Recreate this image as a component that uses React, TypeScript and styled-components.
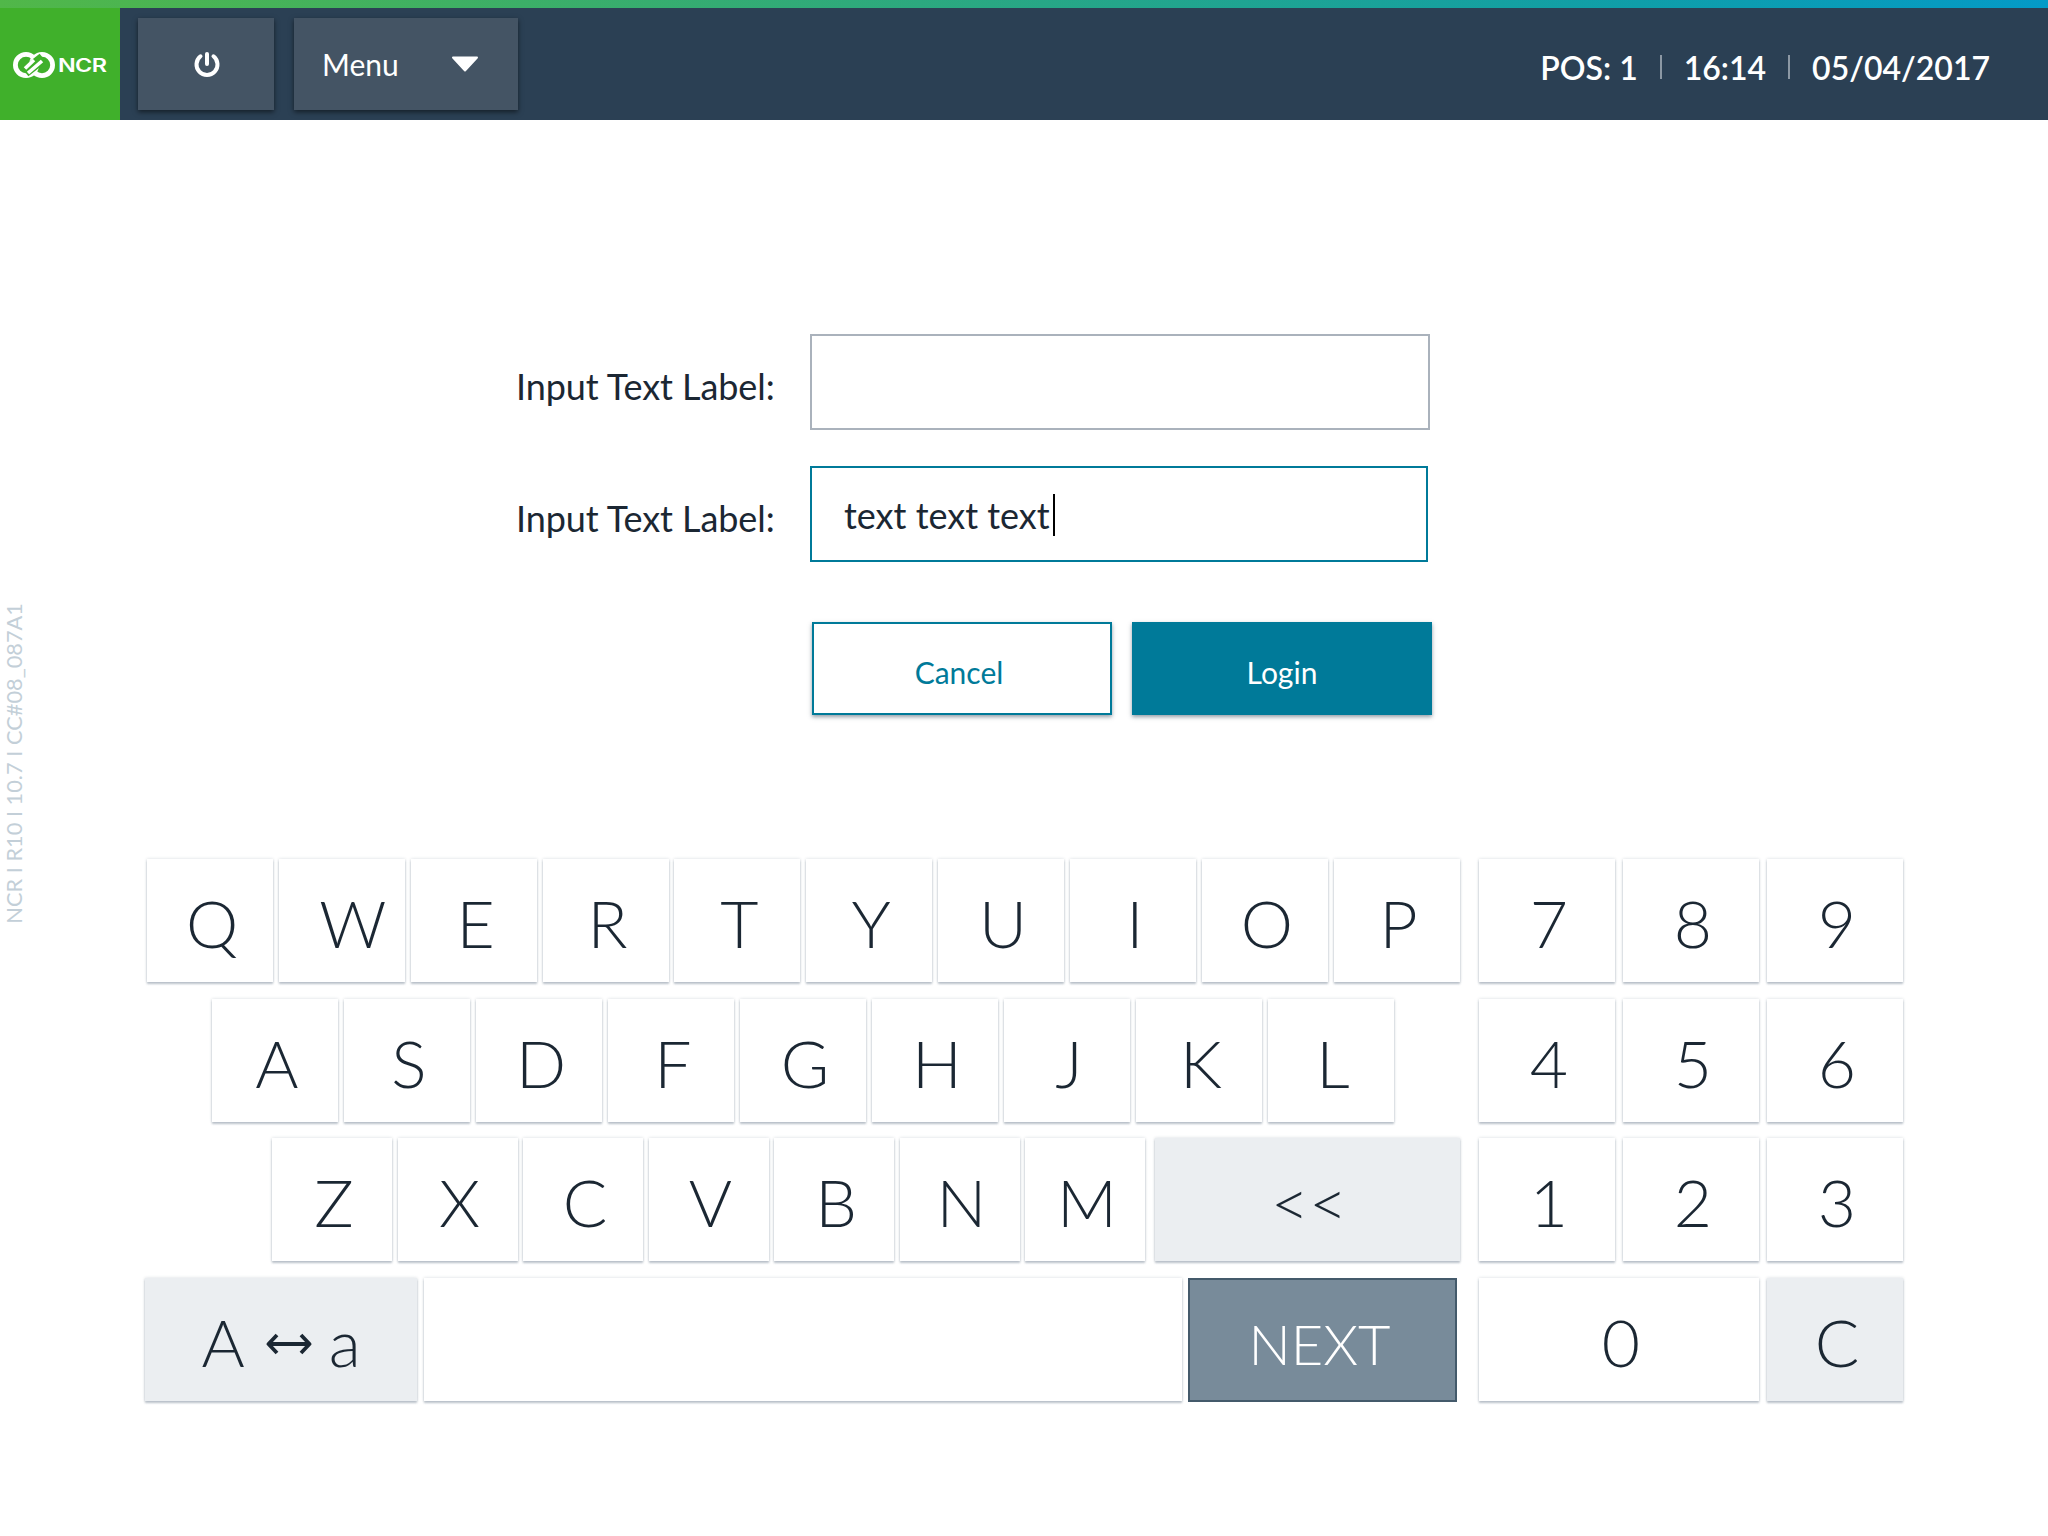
import React from 'react';
import styled, { createGlobalStyle } from 'styled-components';

const ROWS = [
  ['Q', 'W', 'E', 'R', 'T', 'Y', 'U', 'I', 'O', 'P'],
  ['A', 'S', 'D', 'F', 'G', 'H', 'J', 'K', 'L'],
  ['Z', 'X', 'C', 'V', 'B', 'N', 'M'],
];

const App = () => {
  return (
    <>
      <GlobalStyle />
      <Page>
        <TopStripe />
        <Header>
          <LogoTile>
            <svg width="42" height="26" viewBox="0 0 42 26" fill="none">
              <circle cx="13" cy="13" r="10.6" stroke="#fff" strokeWidth="4.8" />
              <circle cx="29" cy="13" r="10.6" stroke="#fff" strokeWidth="4.8" />
              <path d="M12 20 L30 6" stroke="#40b02b" strokeWidth="11" />
              <path d="M12 16.5 L21 8 M15 21 L29 9" stroke="#fff" strokeWidth="3.6" />
            </svg>
            <LogoText>NCR</LogoText>
          </LogoTile>
          <PowerButton>
            <svg width="30" height="30" viewBox="0 0 30 30" fill="none" stroke="#fff" strokeWidth="4" strokeLinecap="round">
              <path d="M15 4 V14" />
              <path d="M8.5 6.3 A10.5 10.5 0 1 0 21.5 6.3" />
            </svg>
          </PowerButton>
          <MenuButton>
            Menu
            <svg width="28" height="16" viewBox="0 0 28 16">
              <path d="M2 1.5 H26 L14 14.5 Z" fill="#fff" stroke="#fff" strokeWidth="2" strokeLinejoin="round" />
            </svg>
          </MenuButton>
          <Status>
            <StatusItem>POS: 1</StatusItem>
            <StatusDivider />
            <StatusItem>16:14</StatusItem>
            <StatusDivider />
            <StatusItem>05/04/2017</StatusItem>
          </Status>
        </Header>

        <VersionTag>NCR I R10 I 10.7 I CC#08_087A1</VersionTag>

        <Form>
          <Field>
            <Label>Input Text Label:</Label>
            <TextBox />
          </Field>
          <Field $focused>
            <Label>Input Text Label:</Label>
            <TextBox $focused>
              text text text<Caret />
            </TextBox>
          </Field>
          <Actions>
            <ActionButton>Cancel</ActionButton>
            <ActionButton $primary>Login</ActionButton>
          </Actions>
        </Form>

        <Keyboard>
          <Letters>
            <LetterRow $indent={2} $gap={5.85}>
              {ROWS[0].map((k) => (
                <Key key={k} $w={126} $shift={k === 'W' ? 22 : 4}>{k}</Key>
              ))}
            </LetterRow>
            <LetterRow $indent={67} $gap={6}>
              {ROWS[1].map((k) => (
                <Key key={k} $w={126}>{k}</Key>
              ))}
            </LetterRow>
            <LetterRow $indent={127} $gap={5.5}>
              {ROWS[2].map((k) => (
                <Key key={k} $w={120}>{k}</Key>
              ))}
              <BackspaceKey $w={305} $muted>&lt;&lt;</BackspaceKey>
            </LetterRow>
            <LetterRow $indent={0} $gap={6.5}>
              <ShiftKey $w={272} $muted>
                <span>A</span>
                <SwapArrow width="46" height="24" viewBox="0 0 46 24" fill="none" stroke="#1b2733" strokeWidth="3.8" strokeLinejoin="round">
                  <path d="M3 12 H43" />
                  <path d="M11 3 L2.5 12 L11 21" />
                  <path d="M35 3 L43.5 12 L35 21" />
                </SwapArrow>
                <span>a</span>
              </ShiftKey>
              <Key $w={758} />
              <NextKey>NEXT</NextKey>
            </LetterRow>
          </Letters>
          <NumPad>
            {['7', '8', '9', '4', '5', '6', '1', '2', '3'].map((k) => (
              <PadKey key={k}>{k}</PadKey>
            ))}
            <PadKey $wide>0</PadKey>
            <PadKey $muted>C</PadKey>
          </NumPad>
        </Keyboard>
      </Page>
    </>
  );
};

const GlobalStyle = createGlobalStyle`
  html, body {
    margin: 0;
    background: #fff;
    font-family: Lato, "Open Sans", sans-serif;
  }
  * { box-sizing: border-box; }
`;

const Page = styled.div`
  height: 1536px;
  position: relative;
  width: 2048px;
`;

const TopStripe = styled.div`
  background: linear-gradient(90deg, #51b749 0%, #0f9ea9 80%, #049ac7 100%);
  height: 8px;
`;

const Header = styled.header`
  align-items: flex-start;
  background: #2b4054;
  display: flex;
  height: 112px;
`;

const LogoTile = styled.div`
  align-items: center;
  background: #40b02b;
  display: flex;
  gap: 3px;
  height: 112px;
  padding: 2px 0 0 13px;
  width: 120px;
`;

const LogoText = styled.span`
  color: #fff;
  display: inline-block;
  font-family: Inter, sans-serif;
  font-size: 18px;
  font-weight: 600;
  letter-spacing: -0.5px;
  transform: scaleX(1.3);
  transform-origin: left center;
`;

const headerButton = `
  align-items: center;
  background: #445464;
  box-shadow: 0 2px 5px rgba(0, 0, 0, 0.55);
  color: #fff;
  display: flex;
  height: 92px;
  margin-top: 10px;
`;

const PowerButton = styled.div`
  ${headerButton}
  justify-content: center;
  margin-left: 18px;
  padding: 2px 0 0 2px;
  width: 136px;
`;

const MenuButton = styled.div`
  ${headerButton}
  font-size: 30px;
  justify-content: space-between;
  margin-left: 20px;
  padding: 0 39px 0 28px;
  width: 224px;
`;

const Status = styled.div`
  align-items: center;
  color: #fff;
  display: flex;
  font-size: 32px;
  font-weight: 600;
  height: 100%;
  margin-left: auto;
  padding: 6px 58px 0 0;
`;

const StatusItem = styled.span`
  white-space: nowrap;
`;

const StatusDivider = styled.span`
  background: #8c98a4;
  height: 24px;
  margin: 0 22px;
  width: 2px;
`;

const VersionTag = styled.div`
  color: #c3cfd8;
  font-size: 21.8px;
  left: 0;
  position: absolute;
  top: 603px;
  transform: rotate(180deg);
  white-space: nowrap;
  writing-mode: vertical-rl;
`;

const Form = styled.div`
  display: flex;
  flex-direction: column;
  margin-left: 516px;
  padding-top: 214px;
`;

const Field = styled.div<{ $focused?: boolean }>`
  align-items: center;
  display: flex;
  height: 96px;
  margin-top: ${(p) => (p.$focused ? '36px' : '0')};
`;

const Label = styled.label`
  color: #1b2733;
  font-size: 36px;
  letter-spacing: -0.08px;
  padding-top: 8px;
  white-space: nowrap;
  width: 294px;
`;

const TextBox = styled.div<{ $focused?: boolean }>`
  align-items: center;
  border: 2px solid ${(p) => (p.$focused ? '#007a99' : '#aab2bc')};
  color: #1b2733;
  display: flex;
  font-size: 36px;
  height: 96px;
  padding: 2px 0 0 32px;
  width: ${(p) => (p.$focused ? '618px' : '620px')};
`;

const Caret = styled.span`
  background: #000;
  display: inline-block;
  height: 42px;
  margin-left: 3px;
  width: 2px;
`;

const Actions = styled.div`
  display: flex;
  gap: 20px;
  margin: 60px 0 0 296px;
`;

const ActionButton = styled.div<{ $primary?: boolean }>`
  align-items: center;
  background: ${(p) => (p.$primary ? '#007a99' : '#fff')};
  border: 2px solid #007a99;
  box-shadow: 0 2px 4px rgba(40, 60, 80, 0.5);
  color: ${(p) => (p.$primary ? '#fff' : '#007a99')};
  display: flex;
  font-size: 30px;
  height: 93px;
  justify-content: center;
  padding: 7px ${(p) => (p.$primary ? '0' : '6px')} 0 0;
  width: 300px;
`;

const Keyboard = styled.div`
  align-items: flex-start;
  display: flex;
  margin: 144px 0 0 145px;
`;

const Letters = styled.div`
  display: flex;
  flex-direction: column;
  gap: 16.67px;
  width: 1315px;
`;

const LetterRow = styled.div<{ $indent: number; $gap: number }>`
  display: flex;
  gap: ${(p) => p.$gap}px;
  padding-left: ${(p) => p.$indent}px;
`;

const keyFace = `
  align-items: center;
  box-shadow: 0 0 3px rgba(120, 135, 150, 0.3), 0 2px 2px rgba(120, 135, 150, 0.45);
  color: #1b2733;
  display: flex;
  font-size: 66px;
  font-weight: 300;
  justify-content: center;
  padding-top: 4px;
`;

const Key = styled.div<{ $w: number; $muted?: boolean; $shift?: number }>`
  ${keyFace}
  background: ${(p) => (p.$muted ? '#ebeef1' : '#fff')};
  flex: 0 0 ${(p) => p.$w}px;
  height: 123px;
  padding-left: ${(p) => p.$shift ?? 4}px;
`;

const BackspaceKey = styled(Key)`
  margin-left: 4px;
`;

const ShiftKey = styled(Key)`
  gap: 19px;
  padding-left: 0;
`;

const SwapArrow = styled.svg`
  margin: 6px -2px 0 2px;
`;

const NextKey = styled.div`
  align-items: center;
  background: #788b9a;
  border: 2px solid #445a6b;
  color: #fff;
  display: flex;
  flex: 0 0 269px;
  font-size: 56px;
  font-weight: 300;
  height: 124px;
  justify-content: center;
  padding: 8px 6px 0 0;
`;

const NumPad = styled.div`
  display: grid;
  gap: 16.67px 8px;
  grid-auto-rows: 123px;
  grid-template-columns: repeat(3, 136px);
  margin-left: 19px;
`;

const PadKey = styled.div<{ $wide?: boolean; $muted?: boolean }>`
  ${keyFace}
  background: ${(p) => (p.$muted ? '#ebeef1' : '#fff')};
  grid-column: ${(p) => (p.$wide ? 'span 2' : 'auto')};
  padding-left: 4px;
`;

export default App;
